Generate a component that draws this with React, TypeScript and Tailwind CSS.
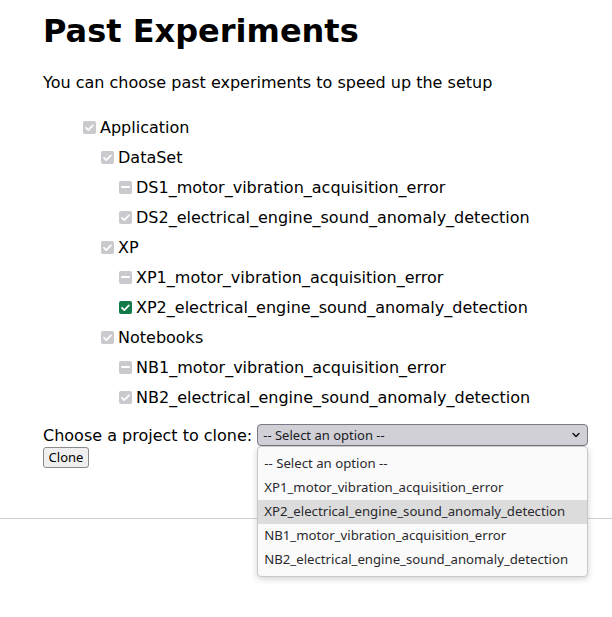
import React from 'react';

type CheckState = 'checked' | 'mixed' | 'active';

interface TreeNode {
  label: string;
  level: number;
  state: CheckState;
}

const tree: TreeNode[] = [
  { label: 'Application', level: 0, state: 'checked' },
  { label: 'DataSet', level: 1, state: 'checked' },
  { label: 'DS1_motor_vibration_acquisition_error', level: 2, state: 'mixed' },
  { label: 'DS2_electrical_engine_sound_anomaly_detection', level: 2, state: 'checked' },
  { label: 'XP', level: 1, state: 'checked' },
  { label: 'XP1_motor_vibration_acquisition_error', level: 2, state: 'mixed' },
  { label: 'XP2_electrical_engine_sound_anomaly_detection', level: 2, state: 'active' },
  { label: 'Notebooks', level: 1, state: 'checked' },
  { label: 'NB1_motor_vibration_acquisition_error', level: 2, state: 'mixed' },
  { label: 'NB2_electrical_engine_sound_anomaly_detection', level: 2, state: 'checked' },
];

const options = [
  '-- Select an option --',
  'XP1_motor_vibration_acquisition_error',
  'XP2_electrical_engine_sound_anomaly_detection',
  'NB1_motor_vibration_acquisition_error',
  'NB2_electrical_engine_sound_anomaly_detection',
];

const indent: Record<number, string> = { 0: 'pl-[40px]', 1: 'pl-[58px]', 2: 'pl-[76px]' };

const Box: React.FC<{ state: CheckState }> = ({ state }) => (
  <span
    className={`w-[13px] h-[13px] rounded-[2px] flex items-center justify-center shrink-0 ${
      state === 'active' ? 'bg-[#117a48]' : 'bg-[#c9c9ce]'
    }`}
  >
    {state === 'mixed' ? (
      <span className="w-[9px] h-[2px] bg-white rounded-[1px]" />
    ) : (
      <svg className="w-[11px] h-[11px]" viewBox="0 0 12 12" fill="none">
        <path d="M2.2 6.3l2.5 2.5 5-5.2" stroke="white" strokeWidth="1.9" strokeLinecap="round" strokeLinejoin="round" />
      </svg>
    )}
  </span>
);

export default function App() {
  return (
    <div className="min-h-[617px] bg-white text-black font-['DejaVu_Sans',sans-serif] text-[16px]">
      <div className="px-[43px]">
        <h1 className="pt-[13px] text-[32px] leading-[37px] font-bold">Past Experiments</h1>

        <p className="mt-[23px] leading-[19px]">You can choose past experiments to speed up the setup</p>

        {/* Tree of past items */}
        <div className="mt-[20px]">
          {tree.map((node) => (
            <div key={node.label} className={`h-[30px] flex items-center gap-[4px] ${indent[node.level]}`}>
              <Box state={node.state} />
              <span className="leading-[19px] whitespace-nowrap">{node.label}</span>
            </div>
          ))}
        </div>

        <div className="mt-[12px] flex items-center h-[22px]">
          <span className="leading-[19px] mr-[5px] whitespace-nowrap shrink-0">Choose a project to clone:</span>
          <div className="relative w-[331px] h-[22px] shrink-0">
            <div className="h-full flex items-center justify-between pl-[5px] pr-[6px] bg-[#d0d0d6] border border-[#7a7a86] rounded-[4px] font-['Noto_Sans',sans-serif] text-[13px] text-[#1b1b1f]">
              <span className="leading-[16px]">-- Select an option --</span>
              <svg className="w-[10px] h-[10px]" viewBox="0 0 10 10" fill="none">
                <path d="M2 3.5l3 3 3-3" stroke="#1b1b1f" strokeWidth="1.6" strokeLinecap="round" strokeLinejoin="round" />
              </svg>
            </div>
            {/* open options popup */}
            <div className="absolute left-0 top-[22px] w-[331px] z-10 bg-[#fafafa] border border-[#c8c8c8] rounded-[4px] shadow-[0_2px_6px_rgba(0,0,0,0.18)] pt-[5px] pb-[4px] font-['Noto_Sans',sans-serif] text-[13.2px] text-[#2a2a2e]">
              {options.map((o, i) => (
                <div
                  key={o}
                  className={`h-[24px] flex items-center pl-[6px] whitespace-nowrap ${i === 2 ? 'bg-[#dcdcdc]' : ''}`}
                >
                  {o}
                </div>
              ))}
            </div>
          </div>
        </div>

        <button className="mt-[1px] w-[46px] h-[21px] flex items-center justify-center bg-[#efefef] border border-[#8a8a8a] rounded-[3px] font-['Noto_Sans',sans-serif] text-[13px] text-black">
          Clone
        </button>
      </div>

      <hr className="mt-[50px] border-0 border-t border-[#cfcfcf]" />
    </div>
  );
}
